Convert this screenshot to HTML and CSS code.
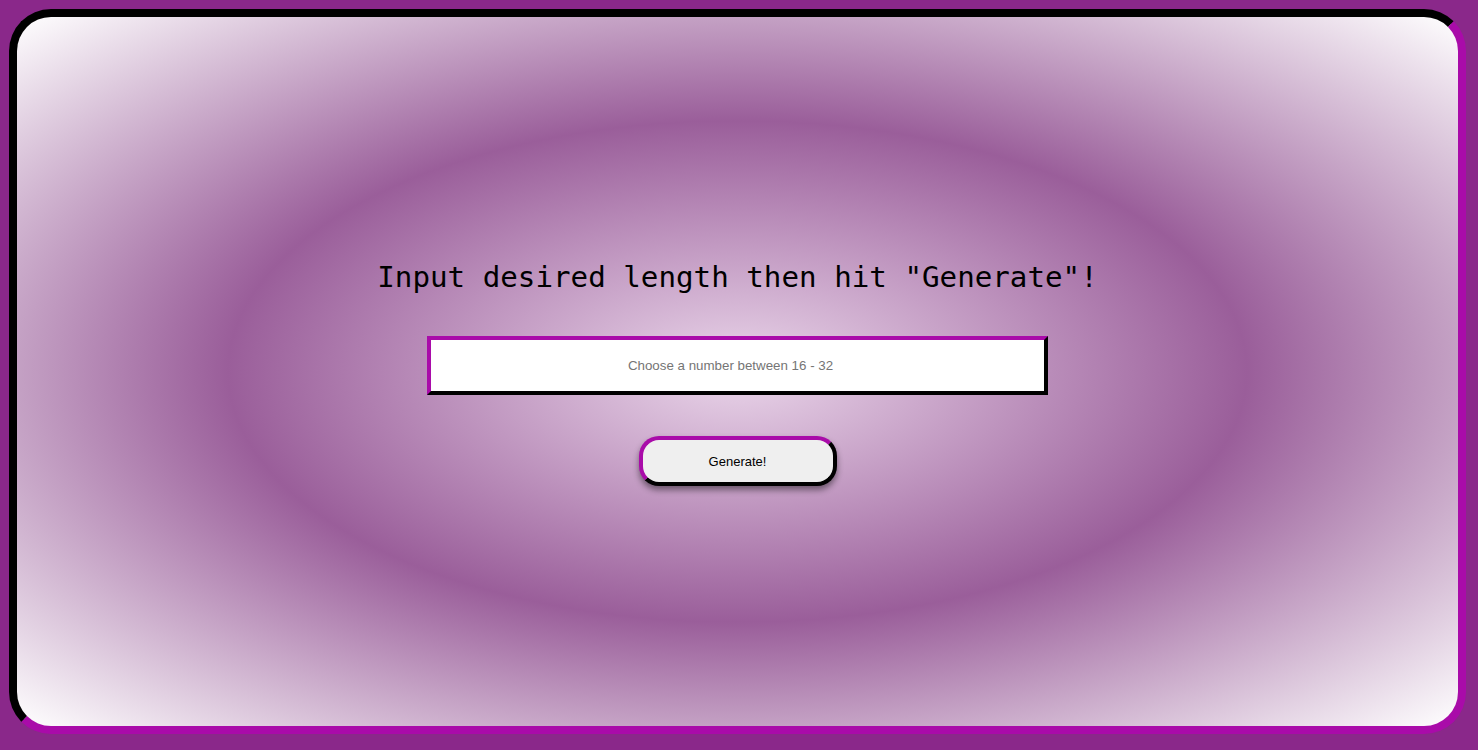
FILE: index.html
```html
<!DOCTYPE html>
<html lang="en">
<head>
<meta charset="utf-8">
<title>Password Generator</title>
<link rel="stylesheet" href="styles.css">
</head>
<body>
<main class="card">
  <h1 class="title">Input desired length then hit "Generate"!</h1>
  <input class="length-input" type="text" placeholder="Choose a number between 16 - 32">
  <button class="generate-btn" type="button">Generate!</button>
</main>
</body>
</html>
```
FILE: styles.css
```css
html, body {
  margin: 0;
  height: 100%;
}
body {
  background: #8a288a;
  box-sizing: border-box;
  padding: 9px 12px 16px 9px;
  display: flex;
}
.card {
  flex: 1;
  box-sizing: border-box;
  border: 8px solid;
  border-color: #000 #a90ba9 #a90ba9 #000;
  border-radius: 42px;
  background: radial-gradient(ellipse at center, #ead6ea 0%, #9a5e9a 50%, #ffffff 100%);
  display: flex;
  flex-direction: column;
  align-items: center;
  justify-content: center;
  padding-top: 3px;
}
.title {
  margin: 0;
  font-family: "DejaVu Sans Mono", "Liberation Mono", monospace;
  font-weight: normal;
  font-size: 29.2px;
  line-height: 34px;
  color: #000;
}
.length-input {
  margin-top: 42px;
  width: 621px;
  height: 59px;
  box-sizing: border-box;
  border: 4px solid;
  border-color: #a90ba9 #000 #000 #a90ba9;
  background: #fff;
  text-align: center;
  padding: 0 16px 0 2px;
  font-family: "Liberation Sans", Arial, sans-serif;
  font-size: 13.33px;
  outline: none;
}
.length-input::placeholder {
  color: #757575;
}
.generate-btn {
  margin-top: 41px;
  width: 198px;
  height: 50px;
  box-sizing: border-box;
  border: 4px solid;
  border-color: #a90ba9 #000 #000 #a90ba9;
  border-radius: 20px;
  background: #efefef;
  color: #000;
  font-family: "Liberation Sans", Arial, sans-serif;
  font-size: 13px;
  box-shadow: 0 4px 6px rgba(0, 0, 0, 0.45);
  cursor: pointer;
}
```
